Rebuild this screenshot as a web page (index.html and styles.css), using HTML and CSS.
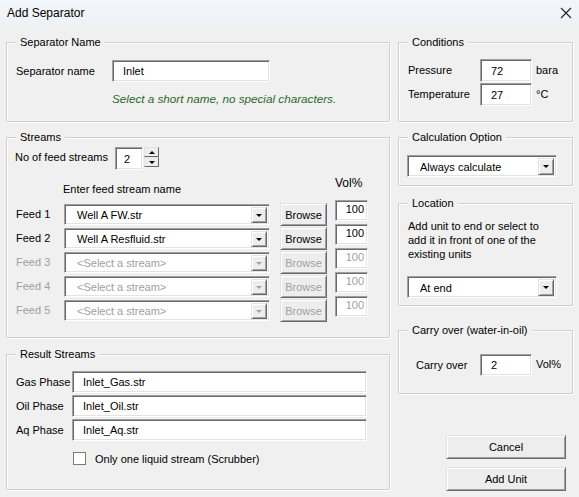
FILE: index.html
```html
<!DOCTYPE html>
<html lang="en">
<head>
  <meta charset="UTF-8">
  <title>Add Separator</title>
  <link rel="stylesheet" href="styles.css">
</head>
<body>
  <div class="dialog">
    <div class="titlebar">
      <span class="title">Add Separator</span>
      <svg class="close" width="12" height="12" viewBox="0 0 12 12">
        <path d="M1 1 L11 11 M11 1 L1 11" stroke="#222" stroke-width="1.1" fill="none"/>
      </svg>
    </div>

    <div class="content">
      <!-- left column -->
      <div class="col-left">
        <div class="group group-name">
          <span class="caption">Separator Name</span>
          <div class="row">
            <span class="lbl lbl-name">Separator name</span>
            <div class="field field-name">Inlet</div>
          </div>
          <div class="hint">Select a short name, no special characters.</div>
        </div>

        <div class="group group-streams">
          <span class="caption">Streams</span>
          <div class="row spin-row">
            <span class="lbl lbl-count">No of feed streams</span>
            <div class="field field-count">2</div>
            <div class="spin">
              <div class="spin-btn"><span class="tri-up"></span></div>
              <div class="spin-btn"><span class="tri-down"></span></div>
            </div>
          </div>
          <div class="feed-head">
            <span class="head-name">Enter feed stream name</span>
            <span class="head-vol">Vol%</span>
          </div>

          <div class="feed-row">
            <span class="feed-lbl">Feed 1</span>
            <div class="combo combo-feed"><span class="combo-text">Well A FW.str</span><span class="drop"><span class="tri-down"></span></span></div>
            <div class="btn btn-browse">Browse</div>
            <div class="field field-vol">100</div>
          </div>
          <div class="feed-row">
            <span class="feed-lbl">Feed 2</span>
            <div class="combo combo-feed"><span class="combo-text">Well A Resfluid.str</span><span class="drop"><span class="tri-down"></span></span></div>
            <div class="btn btn-browse">Browse</div>
            <div class="field field-vol">100</div>
          </div>
          <div class="feed-row disabled">
            <span class="feed-lbl">Feed 3</span>
            <div class="combo combo-feed"><span class="combo-text">&lt;Select a stream&gt;</span><span class="drop"><span class="tri-down"></span></span></div>
            <div class="btn btn-browse">Browse</div>
            <div class="field field-vol">100</div>
          </div>
          <div class="feed-row disabled">
            <span class="feed-lbl">Feed 4</span>
            <div class="combo combo-feed"><span class="combo-text">&lt;Select a stream&gt;</span><span class="drop"><span class="tri-down"></span></span></div>
            <div class="btn btn-browse">Browse</div>
            <div class="field field-vol">100</div>
          </div>
          <div class="feed-row disabled">
            <span class="feed-lbl">Feed 5</span>
            <div class="combo combo-feed"><span class="combo-text">&lt;Select a stream&gt;</span><span class="drop"><span class="tri-down"></span></span></div>
            <div class="btn btn-browse">Browse</div>
            <div class="field field-vol">100</div>
          </div>
        </div>

        <div class="group group-result">
          <span class="caption">Result Streams</span>
          <div class="row result-row">
            <span class="lbl lbl-phase">Gas Phase</span>
            <div class="field field-phase">Inlet_Gas.str</div>
          </div>
          <div class="row result-row">
            <span class="lbl lbl-phase">Oil Phase</span>
            <div class="field field-phase">Inlet_Oil.str</div>
          </div>
          <div class="row result-row">
            <span class="lbl lbl-phase">Aq Phase</span>
            <div class="field field-phase">Inlet_Aq.str</div>
          </div>
          <div class="check-row">
            <span class="checkbox"></span>
            <span>Only one liquid stream (Scrubber)</span>
          </div>
        </div>
      </div>

      <!-- right column -->
      <div class="col-right">
        <div class="group group-cond">
          <span class="caption">Conditions</span>
          <div class="row cond-row">
            <span class="lbl lbl-cond">Pressure</span>
            <div class="field field-num">72</div>
            <span class="unit">bara</span>
          </div>
          <div class="row cond-row">
            <span class="lbl lbl-cond">Temperature</span>
            <div class="field field-num">27</div>
            <span class="unit">&deg;C</span>
          </div>
        </div>

        <div class="group group-calc">
          <span class="caption">Calculation Option</span>
          <div class="combo combo-side"><span class="combo-text">Always calculate</span><span class="drop"><span class="tri-down"></span></span></div>
        </div>

        <div class="group group-loc">
          <span class="caption">Location</span>
          <div class="loc-text">Add unit to end or select to<br>add it in front of one of the<br>existing units</div>
          <div class="combo combo-side"><span class="combo-text">At end</span><span class="drop"><span class="tri-down"></span></span></div>
        </div>

        <div class="group group-carry">
          <span class="caption">Carry over (water-in-oil)</span>
          <div class="row">
            <span class="lbl lbl-carry">Carry over</span>
            <div class="field field-num field-carry">2</div>
            <span class="unit">Vol%</span>
          </div>
        </div>

        <div class="actions">
          <div class="btn btn-action">Cancel</div>
          <div class="btn btn-action">Add Unit</div>
        </div>
      </div>
    </div>
  </div>
</body>
</html>
```

FILE: styles.css
```css
body {
  margin: 0;
  background: #f0f0f0;
  font-family: 'Liberation Sans', Arial, sans-serif;
  font-size: 11px;
  color: #000;
}
.dialog {
  width: 579px;
  height: 497px;
  overflow: hidden;
}
.titlebar {
  height: 30px;
  display: flex;
  align-items: center;
  justify-content: space-between;
  padding: 0 7px;
  background: linear-gradient(#f3f6fa, #eef1f5 80%, #f0f0f0);
}
.title {
  font-size: 12px;
  margin-top: -4px;
}
.close {
  margin-top: -4px;
}
.content {
  display: flex;
  gap: 8px;
  padding: 12px 6px 0 6px;
}
.col-left {
  width: 384px;
  display: flex;
  flex-direction: column;
}
.col-right {
  width: 175px;
  display: flex;
  flex-direction: column;
}

/* frames */
.group {
  position: relative;
  box-sizing: border-box;
  border: 1px solid #d0d0d0;
  box-shadow: inset 1px 1px 0 #fff, 1px 1px 0 #fff;
}
.caption {
  position: absolute;
  top: -8px;
  left: 9px;
  padding: 0 4px;
  line-height: 14px;
  background: #f0f0f0;
}
.row {
  display: flex;
  align-items: center;
}
.lbl {
  flex: none;
}

/* sunken text boxes */
.field {
  box-sizing: border-box;
  background: #fff;
  border: 1px solid;
  border-color: #a0a0a0 #fff #fff #a0a0a0;
  box-shadow: inset 1px 1px 0 #696969, inset -1px -1px 0 #e3e3e3;
  padding: 0 10px;
  display: flex;
  align-items: center;
  white-space: nowrap;
}

/* raised buttons */
.btn {
  box-sizing: border-box;
  background: #ededed;
  border: 1px solid;
  border-color: #e3e3e3 #696969 #696969 #e3e3e3;
  box-shadow: inset 1px 1px 0 #fff, inset -1px -1px 0 #a0a0a0;
  display: flex;
  align-items: center;
  justify-content: center;
}

.combo {
  box-sizing: border-box;
  background: #fff;
  border: 1px solid;
  border-color: #a0a0a0 #fff #fff #a0a0a0;
  box-shadow: inset 1px 1px 0 #696969, inset -1px -1px 0 #e3e3e3;
  display: flex;
  align-items: stretch;
  padding: 2px 2px 1px 2px;
}
.combo-text {
  flex: 1;
  display: flex;
  align-items: center;
  padding-left: 10px;
  white-space: nowrap;
}
.drop {
  width: 16px;
  box-sizing: border-box;
  background: #ededed;
  border: 1px solid;
  border-color: #e3e3e3 #696969 #696969 #e3e3e3;
  box-shadow: inset 1px 1px 0 #fff, inset -1px -1px 0 #a0a0a0;
  display: flex;
  align-items: center;
  justify-content: center;
}
.tri-down, .tri-up {
  width: 0;
  height: 0;
  border-left: 3px solid transparent;
  border-right: 3px solid transparent;
}
.tri-down {
  border-top: 3px solid #000;
}
.tri-up {
  border-bottom: 3px solid #000;
}

/* separator name */
.group-name {
  height: 80px;
  padding: 17px 0 0 9px;
}
.lbl-name {
  width: 96px;
}
.field-name {
  width: 158px;
  height: 22px;
}
.hint {
  margin: 10px 0 0 96px;
  line-height: 14px;
  font-size: 11.7px;
  font-style: italic;
  color: #2b6a2b;
}

/* streams */
.group-streams {
  height: 201px;
  margin-top: 15px;
  padding: 9px 0 0 8px;
}
.spin-row {
  align-items: flex-start;
}
.lbl-count {
  width: 100px;
  line-height: 20px;
}
.field-count {
  width: 28px;
  height: 23px;
  padding-left: 8px;
}
.spin {
  margin-left: 1px;
  width: 15px;
  display: flex;
  flex-direction: column;
}
.spin-btn {
  height: 10px;
  box-sizing: border-box;
  background: #ededed;
  border: 1px solid;
  border-color: #e3e3e3 #696969 #696969 #e3e3e3;
  display: flex;
  align-items: center;
  justify-content: center;
}
.feed-head {
  display: flex;
  height: 24px;
  margin-top: 6px;
}
.head-name {
  margin: 7px 0 0 48px;
  width: 272px;
}
.head-vol {
  line-height: 14px;
  font-size: 12px;
}
.feed-row {
  display: flex;
  align-items: flex-start;
  height: 24px;
}
.feed-lbl {
  width: 48px;
  margin: 4px 0 0 1px;
  line-height: 21px;
}
.combo-feed {
  width: 206px;
  height: 21px;
  margin-top: 4px;
}
.btn-browse {
  width: 47px;
  height: 23px;
  margin: 3px 0 0 10px;
}
.field-vol {
  width: 33px;
  height: 21px;
  margin-left: 8px;
  justify-content: flex-end;
  align-items: flex-start;
  padding: 2px 3px 0 0;
}
.disabled {
  color: #a0a0a0;
}
.disabled .tri-down {
  border-top-color: #a0a0a0;
}

/* result streams */
.group-result {
  height: 136px;
  margin-top: 16px;
  padding: 16px 0 0 9px;
}
.result-row {
  height: 24px;
  align-items: flex-start;
}
.lbl-phase {
  width: 56px;
  line-height: 22px;
}
.field-phase {
  width: 295px;
  height: 22px;
}
.check-row {
  display: flex;
  align-items: center;
  margin: 9px 0 0 57px;
}
.checkbox {
  width: 13px;
  height: 13px;
  box-sizing: border-box;
  background: #fff;
  border: 1px solid #7a7a7a;
  margin-right: 9px;
}

/* right side */
.group-cond {
  height: 80px;
  padding: 16px 0 0 9px;
}
.cond-row {
  height: 24px;
  align-items: flex-start;
}
.lbl-cond {
  width: 72px;
  line-height: 23px;
}
.field-num {
  width: 52px;
  height: 23px;
}
.unit {
  margin-left: 4px;
  line-height: 23px;
}
.group-calc {
  height: 49px;
  margin-top: 15px;
  padding: 17px 0 0 8px;
}
.combo-side {
  width: 150px;
  height: 22px;
}
.group-loc {
  height: 103px;
  margin-top: 17px;
  padding: 15px 0 0 8px;
}
.loc-text {
  line-height: 14px;
  margin-left: 1px;
}
.group-loc .combo-side {
  margin-top: 15px;
}
.group-carry {
  height: 64px;
  margin-top: 24px;
  padding: 22px 0 0 17px;
}
.lbl-carry {
  width: 64px;
}
.field-carry {
  height: 22px;
}
.actions {
  display: flex;
  flex-direction: column;
  gap: 8px;
  margin: 41px 0 0 48px;
}
.btn-action {
  width: 120px;
  height: 24px;
}
```
